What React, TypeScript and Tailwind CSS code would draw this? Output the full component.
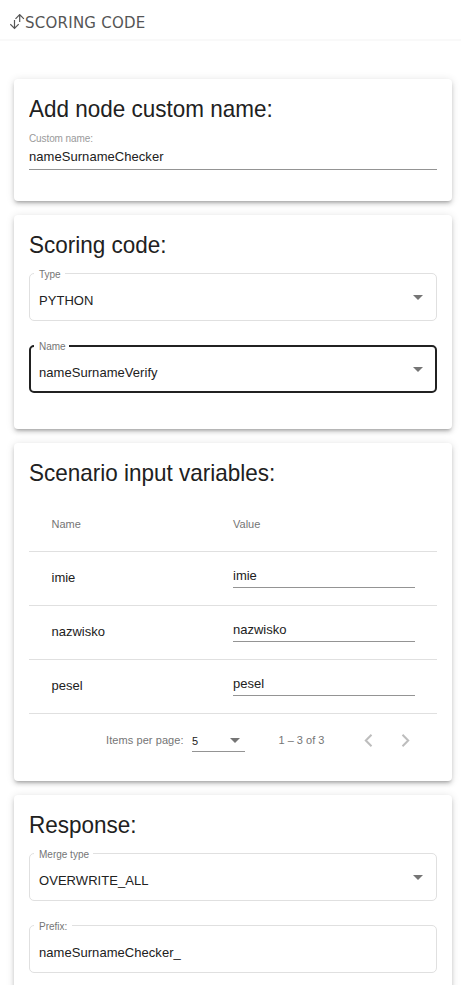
import type { ReactNode } from 'react';

type CardProps = { title: string; className: string; children: ReactNode };

function Card({ title, className, children }: CardProps) {
  return (
    <section
      className={`shrink-0 rounded bg-white px-[15px] pt-[14px] shadow-[0_3px_3px_-2px_rgba(0,0,0,0.2),0_3px_4px_0_rgba(0,0,0,0.14),0_1px_8px_0_rgba(0,0,0,0.12)] ${className}`}
    >
      <h2 className="h-8 origin-left scale-x-[0.937] text-[24px] leading-8 whitespace-nowrap">{title}</h2>
      {children}
    </section>
  );
}

function Caret() {
  return (
    <svg width="10" height="5" viewBox="0 0 10 5" className="shrink-0">
      <path d="M0 0h10L5 5z" fill="#757575" />
    </svg>
  );
}

type FieldProps = {
  label: string;
  value: string;
  notch: string;
  select?: boolean;
  focused?: boolean;
};

function OutlinedField({ label, value, notch, select = false, focused = false }: FieldProps) {
  return (
    <div
      className={`relative flex h-12 items-center justify-between rounded-[5px] ${
        focused ? 'border-2 border-[#212121] pr-3 pl-2' : 'border border-[#e0e0e0] pr-[13px] pl-[9px]'
      }`}
    >
      <span
        className={`absolute h-3 bg-white pl-[5px] text-[10px] leading-3 whitespace-nowrap text-[#757575] ${
          focused ? '-top-[6px] left-[3px]' : '-top-[5px] left-1'
        } ${notch}`}
      >
        {label}
      </span>
      <span className="pt-2 text-[13px] leading-4 tracking-[0.05px]">{value}</span>
      {select && <Caret />}
    </div>
  );
}

const variables = ['imie', 'nazwisko', 'pesel'];

export default function App() {
  return (
    <div className="flex h-[985px] w-[461px] flex-col overflow-hidden bg-white font-['Liberation_Sans',Arial,sans-serif] text-[#212121]">
      <header className="flex h-[41px] shrink-0 items-center border-b-2 border-[#f9f9f9] pt-[5px] pl-[10px] font-['DejaVu_Sans',Verdana,sans-serif] text-[15px] text-[#555]">
        <svg width="15" height="16" viewBox="0 0 15 16" fill="none" stroke="#555" strokeWidth="1.2" className="shrink-0">
          <path d="M4.5 6v8.2M.3 10.2l4.2 4.2 4.2-4.2M9.7 8V.8M5.5 4.8l4.2-4.2 4.2 4.2" />
        </svg>
        <span className="pt-[2px] tracking-[0.25px] whitespace-nowrap">SCORING CODE</span>
      </header>
      <main className="flex flex-col gap-[14px] pt-[38px] pr-[9px] pl-[14px]">
        <Card title="Add node custom name:" className="h-[122px]">
          <div className="flex h-[45px] flex-col border-b border-[#949494]">
            <span className="mt-2 text-[10px] leading-3 tracking-[-0.1px] text-[#9a9a9a]">Custom name:</span>
            <span className="mt-1 text-[13px] leading-4 tracking-[0.05px]">nameSurnameChecker</span>
          </div>
        </Card>

        <Card title="Scoring code:" className="h-[214px]">
          <div className="flex flex-col gap-6 pt-3">
            <OutlinedField label="Type" value="PYTHON" notch="w-[31px]" select />
            <OutlinedField label="Name" value="nameSurnameVerify" notch="w-[35px]" select focused />
          </div>
        </Card>

        <Card title="Scenario input variables:" className="h-[338px]">
          <div className="mt-2 flex h-[55px] items-center border-b border-[#e0e0e0] pl-[22px] text-[11px] text-[#757575]">
            <span className="w-[182px] pl-[0.5px]">Name</span>
            <span>Value</span>
          </div>
          {variables.map((name) => (
            <div key={name} className="flex h-[54px] items-center border-b border-[#e0e0e0] pr-[22px] pl-[22px] text-[13px] leading-4">
              <span className="w-[182px] pb-[2px] pl-[0.5px]">{name}</span>
              <span className="h-[21px] w-[182px] -translate-y-px border-b border-[#949494] pt-px">{name}</span>
            </div>
          ))}
          <div className="flex h-[52px] items-center pl-[77px] text-[11px] leading-4 text-[#757575]">
            <span className="w-[86px] tracking-[0.08px] whitespace-nowrap">Items per page:</span>
            <div className="mt-[3px] flex h-[21px] w-[53px] items-center justify-between border-b border-[#949494] pr-[5px] text-[#212121]">
              <span>5</span>
              <span className="pb-[2px]">
                <Caret />
              </span>
            </div>
            <span className="ml-[33.5px] w-[85.5px] whitespace-nowrap">1 – 3 of 3</span>
            <svg width="46" height="13" viewBox="0 0 46 13" fill="none" stroke="#bdbdbd" strokeWidth="2">
              <path d="M7.5 .8 1.8 6.5 7.5 12.2M38.5 .8 44.2 6.5 38.5 12.2" />
            </svg>
          </div>
        </Card>

        <Card title="Response:" className="h-[220px]">
          <div className="flex flex-col gap-6 pt-3">
            <OutlinedField label="Merge type" value="OVERWRITE_ALL" notch="w-[59px]" select />
            <OutlinedField label="Prefix:" value="nameSurnameChecker_" notch="w-[38px]" />
          </div>
        </Card>
      </main>
    </div>
  );
}
